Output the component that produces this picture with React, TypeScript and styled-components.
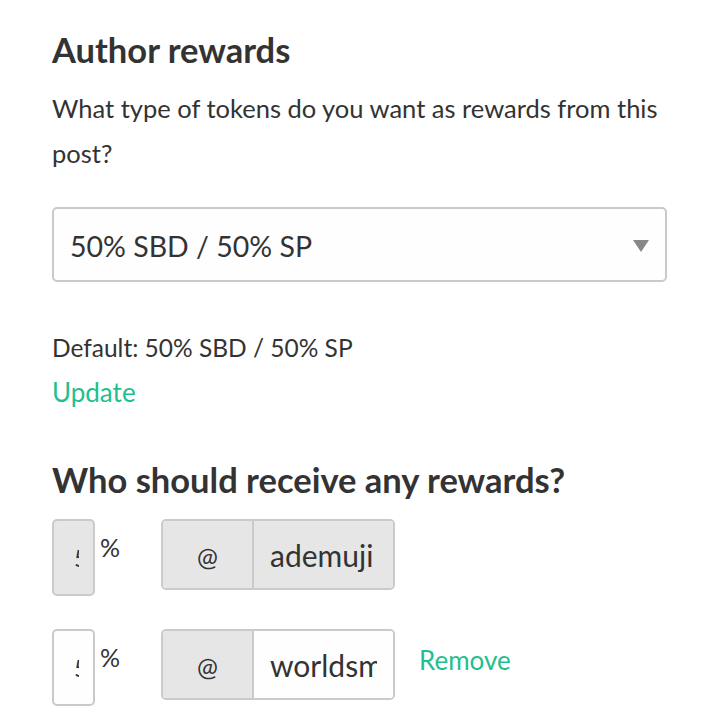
import React from 'react'
import styled, { createGlobalStyle } from 'styled-components'

const GlobalStyle = createGlobalStyle`
  html, body {
    margin: 0;
    padding: 0;
    background: #fff;
  }
  body {
    font-family: Lato, "Open Sans", sans-serif;
    color: #333;
  }
`

const Page = styled.div`
  padding: 24px 53px 0 52px;
  width: 720px;
  box-sizing: border-box;
`

const Heading = styled.h3<{ $top?: number }>`
  margin: ${(p) => p.$top ?? 0}px 0 0;
  font-size: 34.5px;
  font-weight: 700;
  line-height: 52px;
  color: #333;
`

const Lead = styled.p`
  margin: 10px 0 0;
  font-size: 25.5px;
  line-height: 45px;
  color: #333;
`

const SelectBox = styled.div`
  margin-top: 31px;
  height: 75px;
  box-sizing: border-box;
  border: 2px solid #cacaca;
  border-radius: 5px;
  background: #fefefe;
  display: flex;
  align-items: center;
  justify-content: space-between;
  padding: 2px 16px 0 16px;
  font-size: 28.5px;
  color: #333;
`

const Caret = styled.span`
  width: 0;
  height: 0;
  border-left: 8px solid transparent;
  border-right: 8px solid transparent;
  border-top: 12px solid #888;
`

const Note = styled.div`
  margin-top: 51px;
  font-size: 24.5px;
  line-height: 30px;
`

const LinkLine = styled.div`
  margin-top: 13px;
  line-height: 32px;
`

const Link = styled.a`
  font-size: 26px;
  line-height: 32px;
  color: #1fbf8f;
  text-decoration: none;
  cursor: pointer;
`

const Row = styled.div<{ $top: number }>`
  display: flex;
  align-items: flex-start;
  margin-top: ${(p) => p.$top}px;
`

const Percent = styled.input<{ $disabled?: boolean }>`
  width: 43px;
  height: 77px;
  box-sizing: border-box;
  border: 2px solid #cacaca;
  border-radius: 5px;
  padding: 0 14px 0 20px;
  font-family: inherit;
  font-size: 24px;
  color: #333;
  background: ${(p) => (p.$disabled ? '#e6e6e6' : '#fefefe')};
  outline: none;
`

const PercentSign = styled.span`
  margin: 13px 0 0 5px;
  width: 61px;
  flex-shrink: 0;
  font-size: 25px;
  line-height: 30px;
`

const Group = styled.div`
  display: flex;
  width: 234px;
  height: 71px;
  flex-shrink: 0;
  box-sizing: border-box;
  border: 2px solid #cacaca;
  border-radius: 5px;
  overflow: hidden;
`

const Addon = styled.span`
  width: 89px;
  flex-shrink: 0;
  display: flex;
  align-items: center;
  justify-content: center;
  background: #e6e6e6;
  border-right: 2px solid #cacaca;
  font-size: 25px;
  padding-top: 2px;
`

const Account = styled.input<{ $disabled?: boolean }>`
  flex: 1;
  min-width: 0;
  border: none;
  padding: 0 16px;
  font-family: inherit;
  font-size: 30px;
  color: #333;
  background: ${(p) => (p.$disabled ? '#e6e6e6' : '#fefefe')};
  outline: none;
`

const RemoveWrap = styled.div`
  margin: 15px 0 0 24px;
  line-height: 32px;
`

const beneficiaries = [
  { percent: '50', account: 'ademuji', locked: true },
  { percent: '50', account: 'worldsmile', locked: false },
]

export default function App() {
  return (
    <Page>
      <GlobalStyle />
      <Heading>Author rewards</Heading>
      <Lead>What type of tokens do you want as rewards from this post?</Lead>
      <SelectBox>
        <span>50% SBD / 50% SP</span>
        <Caret />
      </SelectBox>
      <Note>Default: 50% SBD / 50% SP</Note>
      <LinkLine>
        <Link>Update</Link>
      </LinkLine>
      <Heading $top={42}>Who should receive any rewards?</Heading>
      {beneficiaries.map((b, i) => (
        <Row key={b.account} $top={i === 0 ? 13 : 33}>
          <Percent $disabled={b.locked} readOnly value={b.percent} />
          <PercentSign>%</PercentSign>
          <Group>
            <Addon>@</Addon>
            <Account $disabled={b.locked} readOnly value={b.account} />
          </Group>
          {!b.locked && (
            <RemoveWrap>
              <Link>Remove</Link>
            </RemoveWrap>
          )}
        </Row>
      ))}
    </Page>
  )
}
